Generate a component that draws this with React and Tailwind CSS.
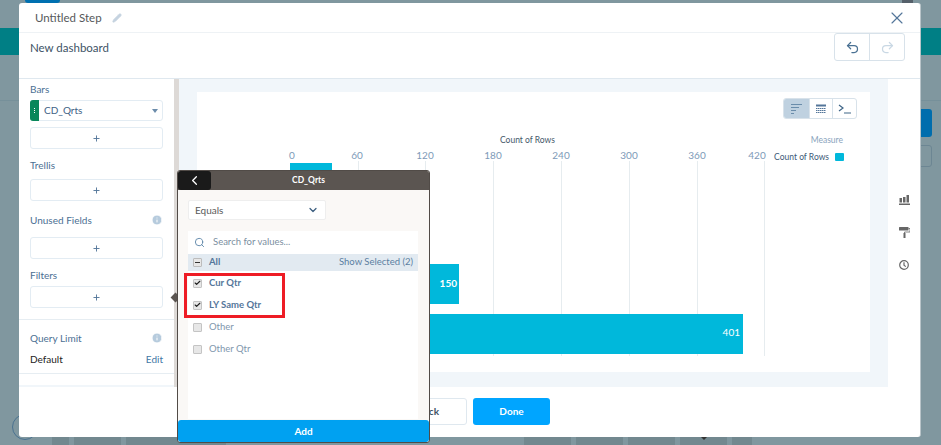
import React from "react";
import { X, Undo2, Redo2, Pencil, Search, ChevronDown, ChevronLeft, Check, Info, Plus } from "lucide-react";

const ticks = [
  { label: "0", x: 292 },
  { label: "60", x: 358, textX: 357 },
  { label: "120", x: 425 },
  { label: "180", x: 493 },
  { label: "240", x: 561 },
  { label: "300", x: 629 },
  { label: "360", x: 697 },
  { label: "420", x: 764, textX: 757 },
];

const SectionLabel = ({ children, className = "" }) => (
  <div className={`h-[14px] text-[10px] leading-[14px] text-[#4b6f93] ${className}`}>
    {children}
  </div>
);

const AddBox = ({ className = "" }) => (
  <div className={`h-[22px] flex items-center justify-center bg-white border border-[#e3ecf3] rounded-[3px] ${className}`}>
    <Plus size={9} strokeWidth={2.5} className="text-[#54769a]" />
  </div>
);

const ValueRow = ({ label, checked }) => (
  <div className="h-[22px] flex items-center pl-[5px]">
    <span className="w-[7px] h-[7px] box-content border border-[#c4c4c4] bg-[#e7e7e7] rounded-[1px] flex items-center justify-center">
      {checked && <Check size={8} strokeWidth={4} className="text-[#222]" />}
    </span>
    <span className={`ml-[7px] text-[9.5px] ${checked ? "font-bold text-[#54769a]" : "text-[#7f97ad]"}`}>
      {label}
    </span>
  </div>
);

const Chart = () => (
  <svg width="673" height="280" viewBox="197 92 673 280" className="absolute left-0 top-0">
    {ticks.slice(1).map((t) => (
      <line key={t.label} x1={t.x + 0.5} x2={t.x + 0.5} y1="161" y2="356" stroke="#e6ecef" strokeWidth="1" />
    ))}
    {ticks.map((t) => (
      <text key={t.label} x={t.textX || t.x} y="159" textAnchor="middle" fontSize="10" fill="#7d9ab8" fontFamily="Lato, sans-serif">
        {t.label}
      </text>
    ))}
    <rect x="290" y="163" width="42" height="40" fill="#00b8db" />
    <rect x="290" y="264" width="169" height="40" fill="#00b8db" />
    <rect x="290" y="314" width="453" height="40" fill="#00b8db" />
    <text x="457" y="287" textAnchor="end" fontSize="10" fontWeight="700" fill="#ffffff" fontFamily="Lato, sans-serif">150</text>
    <text x="740" y="336" textAnchor="end" fontSize="10" fill="#ffffff" fontFamily="Lato, sans-serif">401</text>
  </svg>
);

const BarsIcon = () => (
  <svg width="11" height="10" viewBox="0 0 11 10" fill="#666">
    <rect x="0.5" y="3" width="2.5" height="4.5" />
    <rect x="4" y="2" width="2.5" height="5.5" />
    <rect x="7.5" y="0" width="2.5" height="7.5" />
    <rect x="0" y="8.5" width="11" height="1.5" />
  </svg>
);

const RollerIcon = () => (
  <svg width="11" height="11" viewBox="0 0 11 11" fill="#666">
    <rect x="0" y="0" width="9.5" height="3.5" rx="0.5" />
    <path d="M9.5 1.5H11V5H5.5V6" fill="none" stroke="#666" strokeWidth="0.8" />
    <rect x="4.5" y="6" width="2" height="5" />
  </svg>
);

const ClockIcon = () => (
  <svg width="10" height="10" viewBox="0 0 10 10" fill="none" stroke="#666" strokeWidth="1.2">
    <circle cx="5" cy="5" r="4.3" />
    <path d="M5 2.3V5.2L6.8 6.6" />
  </svg>
);

const GridIcon = () => (
  <svg width="10" height="10" viewBox="0 0 10 10" className="text-[#54769a]" stroke="currentColor" strokeWidth="1">
    <path d="M0 1.5H10" strokeWidth="2" />
    <path d="M0 4.5H10M0 6.5H10M0 8.5H10" strokeDasharray="1.5 0.5" />
  </svg>
);

const FilterPopover = () => (
  <div className="absolute left-[177px] top-[170px] w-[253px] h-[273px] flex flex-col bg-[#faf8f6] border border-[#514b47] rounded-[3px] overflow-hidden">
    <div className="h-[19px] shrink-0 relative flex items-center justify-center pl-[10px] bg-[#5b5551]">
      <div className="absolute left-0 top-0 w-[33px] h-[19px] flex items-center justify-center bg-[#1a1a1a] rounded-[3px]">
        <ChevronLeft size={15} strokeWidth={2} className="text-white" />
      </div>
      <span className="text-[8.5px] font-bold text-white">CD_Qrts</span>
    </div>
    <div className="flex-1 flex flex-col px-[10px] pt-[10px]">
      <div className="w-[138px] h-[20px] shrink-0 flex items-center justify-between pl-[6px] pr-[6px] bg-white border border-[#eeeeee] rounded-[2px]">
        <span className="text-[10px] text-[#5a5a5a]">Equals</span>
        <ChevronDown size={12} strokeWidth={2.5} className="text-[#3d5f80]" />
      </div>
      <div className="mt-[11px] w-[230px] h-[188px] shrink-0 bg-white">
        <div className="h-[23px] flex items-center pl-[6px]">
          <Search size={11} className="text-[#5d86a8]" />
          <span className="ml-[8px] text-[9.5px] text-[#7b8f9f]">Search for values...</span>
        </div>
        <div className="h-[17px] flex items-center justify-between pl-[5px] pr-[5px] bg-[#e2eaf1]">
          <div className="flex items-center">
            <span className="w-[7px] h-[7px] box-content border border-[#bcbcbc] bg-[#e7e7e7] rounded-[1px] flex items-center justify-center">
              <span className="w-[5px] h-[1px] bg-[#333]" />
            </span>
            <span className="ml-[7px] text-[9.5px] font-bold text-[#54769a]">All</span>
          </div>
          <span className="text-[9.5px] text-[#5b7fa1]">Show Selected (2)</span>
        </div>
        <div className="pt-[1px]">
          <ValueRow label="Cur Qtr" checked />
          <ValueRow label="LY Same Qtr" checked />
          <ValueRow label="Other" />
          <ValueRow label="Other Qtr" />
        </div>
      </div>
    </div>
    <div className="h-[22px] shrink-0 flex items-center justify-center bg-[#00a1f1] rounded-[3px] text-[10px] font-bold text-white">
      Add
    </div>
  </div>
);

const App = () => {
  return (
    <div className="relative w-[941px] h-[445px] overflow-hidden bg-[#80979f] font-['Lato',sans-serif]">
      {/* page behind the modal */}
      <div className="absolute left-0 top-[28px] w-full h-[27px] bg-[#007f85]" />
      <div className="absolute left-[25px] top-0 w-[35px] h-[3px] bg-[#0070b0] rounded-b" />
      <div className="absolute left-[902px] top-0 w-[11px] h-[3px] bg-[#55606a]" />
      <div className="absolute left-0 top-[100px] w-full h-px bg-[#76909a]" />
      <div className="absolute left-[900px] top-[109px] w-[32px] h-[28px] bg-[#006dad] rounded-[3px]" />
      <div className="absolute left-[900px] top-[145px] w-[32px] h-[22px] border border-[#6c8693] rounded-[3px]" />
      <div className="absolute left-[12px] top-[414px] w-[26px] h-[26px] border border-[#4a7290] rounded-full" />
      <div className="absolute left-[52px] top-[437px] w-[700px] h-[8px] flex gap-[5px]">
        <div className="w-[17px] bg-[#72888f]" />
        <div className="w-[47px] bg-[#72888f]" />
        <div className="w-[100px] bg-[#72888f]" />
        <div className="flex-1" />
        <div className="w-[47px] bg-[#72888f]" />
        <div className="w-[47px] bg-[#72888f]" />
        <div className="w-[47px] bg-[#72888f]" />
        <div className="w-[47px] flex justify-center bg-[#72888f]">
          <span className="w-0 h-0 border-x-[3px] border-x-transparent border-t-[3px] border-t-[#333]" />
        </div>
        <div className="w-[20px] bg-[#72888f]" />
      </div>

      {/* modal */}
      <div className="absolute left-[19px] top-[3px] w-[902px] h-[434px] flex flex-col bg-white rounded-[3px] border-r border-[#b9c4c9]">
        <div className="h-[30px] shrink-0 flex items-center justify-between pl-[16px] pr-[13px] border-b border-[#eef2f5]">
          <div className="flex items-center">
            <span className="text-[11.5px] text-[#55585a]">Untitled Step</span>
            <Pencil size={10} fill="#c5d3e0" className="ml-[10px] text-[#c5d3e0]" />
          </div>
          <X size={20} strokeWidth={1.4} className="text-[#54769a]" />
        </div>
        <div className="h-[46px] shrink-0 flex items-start justify-between pl-[11px] pr-[15px] border-b border-[#dfe8ef]">
          <span className="mt-[6px] text-[11.5px] text-[#3d5265]">New dashboard</span>
          <div className="flex w-[71px] h-[28px] border border-[#d8e2ea] rounded-[3px]">
            <div className="flex-1 flex items-center justify-center border-r border-[#d8e2ea]">
              <Undo2 size={15} strokeWidth={2} className="text-[#4a7193]" />
            </div>
            <div className="flex-1 flex items-center justify-center">
              <Redo2 size={15} strokeWidth={2} className="text-[#c9d8e4]" />
            </div>
          </div>
        </div>

        <div className="h-[308px] shrink-0 flex">
          {/* sidebar */}
          <div className="w-[155px] shrink-0 flex flex-col">
            <div className="px-[11px] pt-[3px] pb-[11px] border-b border-[#e6edf2]">
              <SectionLabel>Bars</SectionLabel>
              <div className="mt-[4px] h-[21px] flex items-center bg-white border border-[#e3ecf3] rounded-[3px]">
                <div className="w-[9px] h-[21px] -ml-px flex flex-col items-center justify-center gap-[1px] bg-[#08875a] rounded-l-[3px]">
                  <span className="w-[1px] h-[1px] bg-white" />
                  <span className="w-[1px] h-[1px] bg-white" />
                  <span className="w-[1px] h-[1px] bg-white" />
                </div>
                <span className="ml-[5px] flex-1 text-[10px] text-[#3f6285]">CD_Qrts</span>
                <span className="mr-[4px] w-0 h-0 border-x-[3px] border-x-transparent border-t-[4px] border-t-[#6c8cab]" />
              </div>
              <AddBox className="mt-[6px]" />
              <SectionLabel className="mt-[9px]">Trellis</SectionLabel>
              <AddBox className="mt-[7px]" />
              <div className="mt-[12px] flex items-center justify-between">
                <SectionLabel>Unused Fields</SectionLabel>
                <Info size={12} fill="#b6cbdd" strokeWidth={2} className="text-white" />
              </div>
              <AddBox className="mt-[10px]" />
              <SectionLabel className="mt-[9px]">Filters</SectionLabel>
              <AddBox className="mt-[4px]" />
            </div>
            <div className="px-[11px] pt-[11px] pb-[7px] border-b border-[#e6edf2]">
              <div className="flex items-center justify-between">
                <SectionLabel>Query Limit</SectionLabel>
                <Info size={12} fill="#b6cbdd" strokeWidth={2} className="text-white" />
              </div>
              <div className="mt-[7px] h-[14px] flex items-center justify-between text-[10px] leading-[14px]">
                <span className="text-[#222]">Default</span>
                <span className="text-[#3f77a5]">Edit</span>
              </div>
            </div>
            <div className="mt-[11px] flex-1 bg-[#f1f6fa]" />
          </div>
          <div className="w-[5px] shrink-0 bg-[#ddd9d6]" />

          {/* chart canvas */}
          <div className="w-[709px] shrink-0 bg-[#f1f6fa] pl-[18px] pt-[13px]">
            <div className="relative w-[673px] h-[280px] bg-white">
              <Chart />
              <div className="absolute right-[13px] top-[6px] flex h-[21px] w-[74px] border border-[#d8e2ea] rounded-[3px] overflow-hidden">
                <div className="w-[25px] flex flex-col items-start justify-center gap-[2px] pl-[7px] bg-[#bfd1e0]">
                  <span className="w-[11px] h-px bg-[#6a8dab]" />
                  <span className="w-[8px] h-px bg-[#6a8dab]" />
                  <span className="w-[5px] h-px bg-[#6a8dab]" />
                  <span className="w-[3px] h-px bg-[#6a8dab]" />
                </div>
                <div className="w-[24px] flex items-center justify-center border-x border-[#d8e2ea]">
                  <GridIcon />
                </div>
                <div className="flex-1 flex items-center justify-center text-[#3f6688]">
                  <svg width="13" height="10" viewBox="0 0 13 10" fill="none" stroke="currentColor" strokeWidth="1.2">
                    <path d="M1 1l4 3-4 3" />
                    <path d="M6 9h7" />
                  </svg>
                </div>
              </div>
              <div className="absolute left-[303px] top-[42px] text-[8.5px] leading-[12px] text-[#45586a]">Count of Rows</div>
              <div className="absolute right-[27px] top-[42px] text-[8.5px] leading-[12px] text-[#8aa4bd]">Measure</div>
              <div className="absolute right-[26px] top-[59px] flex items-center gap-[6px]">
                <span className="text-[8.5px] leading-[12px] text-[#3d5a78]">Count of Rows</span>
                <span className="w-[9px] h-[8px] bg-[#00b8db] rounded-[1px]" />
              </div>
            </div>
          </div>

          {/* right rail */}
          <div className="flex-1 flex flex-col items-center pt-[116px] gap-[22px]">
            <BarsIcon />
            <RollerIcon />
            <ClockIcon />
          </div>
        </div>

        {/* footer */}
        <div className="flex-1 flex items-start justify-start pl-[371px] pt-[11px] gap-[6px]">
          <div className="w-[77px] h-[27px] flex items-center justify-end pr-[27px] border border-[#dfe8ef] rounded-[3px] text-[10px] font-bold text-[#3d5265]">
            Back
          </div>
          <div className="w-[77px] h-[27px] flex items-center justify-center bg-[#00a5ff] rounded-[3px] text-[10px] font-bold text-white">
            Done
          </div>
        </div>
      </div>

      <div className="absolute left-[172px] top-[294px] w-[7px] h-[7px] rotate-45 bg-[#5b5551]" />
      <FilterPopover />
      <div className="absolute left-[184px] top-[273px] w-[101px] h-[45px] border-[3px] border-[#ee1c25]" />
    </div>
  );
};

export default App;
